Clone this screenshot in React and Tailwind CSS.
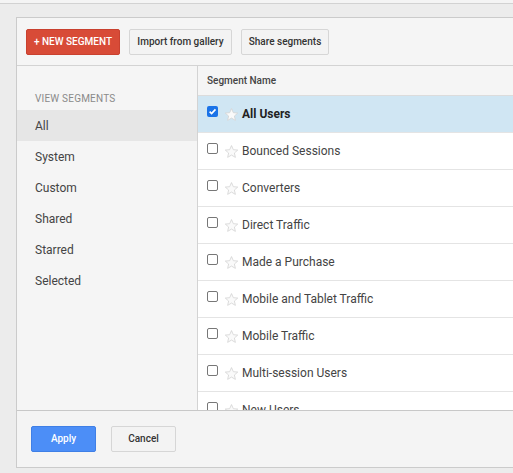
import React, { useState } from "react";

const segments = [
    "All Users",
    "Bounced Sessions",
    "Converters",
    "Direct Traffic",
    "Made a Purchase",
    "Mobile and Tablet Traffic",
    "Mobile Traffic",
    "Multi-session Users",
    "New Users",
];

const views = ["All", "System", "Custom", "Shared", "Starred", "Selected"];

function Star() {
    return (
        <svg width="15" height="15" viewBox="0 0 24 24" className="shrink-0 ml-[6px]">
            <path
                d="M12 2.5l2.9 6.6 7.1.6-5.4 4.7 1.6 7-6.2-3.7-6.2 3.7 1.6-7L2 9.7l7.1-.6z"
                fill="#fafafa"
                stroke="#d4d4d4"
                strokeWidth="1.3"
                strokeLinejoin="round"
            />
        </svg>
    );
}

function Checkbox({ checked }) {
    if (checked) {
        return (
            <div className="w-[11px] h-[11px] rounded-[2px] bg-[#1a73e8] flex items-center justify-center shrink-0">
                <svg width="9" height="9" viewBox="0 0 10 10">
                    <path d="M1.8 5.2l2.2 2.2 4.3-4.8" fill="none" stroke="#fff" strokeWidth="1.8" />
                </svg>
            </div>
        );
    }
    return <div className="w-[11px] h-[11px] rounded-[2px] border border-[#777] bg-white shrink-0" />;
}

export default function App() {
    const [view, setView] = useState("All");
    const [selected] = useState("All Users");

    return (
        <div
            className="w-[513px] h-[473px] bg-[#ececec] overflow-hidden"
            style={{ fontFamily: "Roboto, 'Liberation Sans', sans-serif" }}
        >
            <div className="h-[4px] bg-[#f4f4f4] border-b border-[#d2d2d2]" />
            <div className="ml-[16px] mt-[13px] w-[510px] h-[451px] border border-[#cbcbcb] bg-[#f5f5f5] flex flex-col">
                {/* toolbar */}
                <div className="h-[48px] shrink-0 flex items-center gap-[9px] pl-[9px] border-b border-[#d3d3d3]">
                    <button className="h-[26px] w-[94px] bg-[#d84b37] text-white text-[10px] font-medium rounded-[2px] border border-[#c9412f]">
                        + NEW SEGMENT
                    </button>
                    <button className="h-[26px] w-[103px] bg-[#f3f3f3] text-[#333] text-[10px] font-medium rounded-[2px] border border-[#d6d6d6]">
                        Import from gallery
                    </button>
                    <button className="h-[26px] w-[88px] bg-[#f3f3f3] text-[#333] text-[10px] font-medium rounded-[2px] border border-[#d6d6d6]">
                        Share segments
                    </button>
                </div>

                {/* body */}
                <div className="flex h-[344px] shrink-0">
                    <div className="w-[181px] shrink-0 bg-[#f5f5f5] border-r border-[#d3d3d3] pt-[26px]">
                        <div className="pl-[18px] text-[10px] text-[#8a8a8a] tracking-[0.2px] h-[18px] leading-[14px]">
                            VIEW SEGMENTS
                        </div>
                        {views.map((v) => (
                            <div
                                key={v}
                                onClick={() => setView(v)}
                                className={
                                    "h-[31px] flex items-center pl-[18px] text-[12px] text-[#444] cursor-pointer " +
                                    (view === v ? "bg-[#e6e6e6]" : "")
                                }
                            >
                                {v}
                            </div>
                        ))}
                    </div>

                    <div className="flex-1 bg-white overflow-hidden">
                        <div className="h-[30px] bg-[#f5f5f5] border-b border-[#dcdcdc] flex items-center">
                            <div className="flex-1 pl-[9px] text-[10px] font-medium text-[#444]">Segment Name</div>
                            <div className="w-[3px] h-full border-l border-[#dcdcdc]" />
                        </div>
                        {segments.map((s) => {
                            const on = s === selected;
                            return (
                                <div
                                    key={s}
                                    className={
                                        "h-[37px] flex items-center pl-[9px] border-b border-[#e4e4e4] " +
                                        (on ? "bg-[#d0e6f3]" : "bg-white")
                                    }
                                >
                                    <div className="-mt-[6px]">
                                        <Checkbox checked={on} />
                                    </div>
                                    <Star />
                                    <span
                                        className={
                                            "ml-[3px] " +
                                            (on
                                                ? "text-[12px] font-bold text-[#222]"
                                                : "text-[12px] text-[#444]")
                                        }
                                    >
                                        {s}
                                    </span>
                                </div>
                            );
                        })}
                    </div>
                </div>

                {/* footer */}
                <div className="flex-1 border-t border-[#c8c8c8] bg-[#f4f4f4] flex items-center gap-[15px] pl-[14px] pb-[1px]">
                    <button className="w-[65px] h-[26px] bg-[#4c8ef7] border border-[#3f7fe6] text-white text-[10px] font-medium rounded-[2px]">
                        Apply
                    </button>
                    <button className="w-[65px] h-[26px] bg-[#f3f3f3] border border-[#d6d6d6] text-[#333] text-[10px] font-medium rounded-[2px]">
                        Cancel
                    </button>
                </div>
            </div>
        </div>
    );
}
